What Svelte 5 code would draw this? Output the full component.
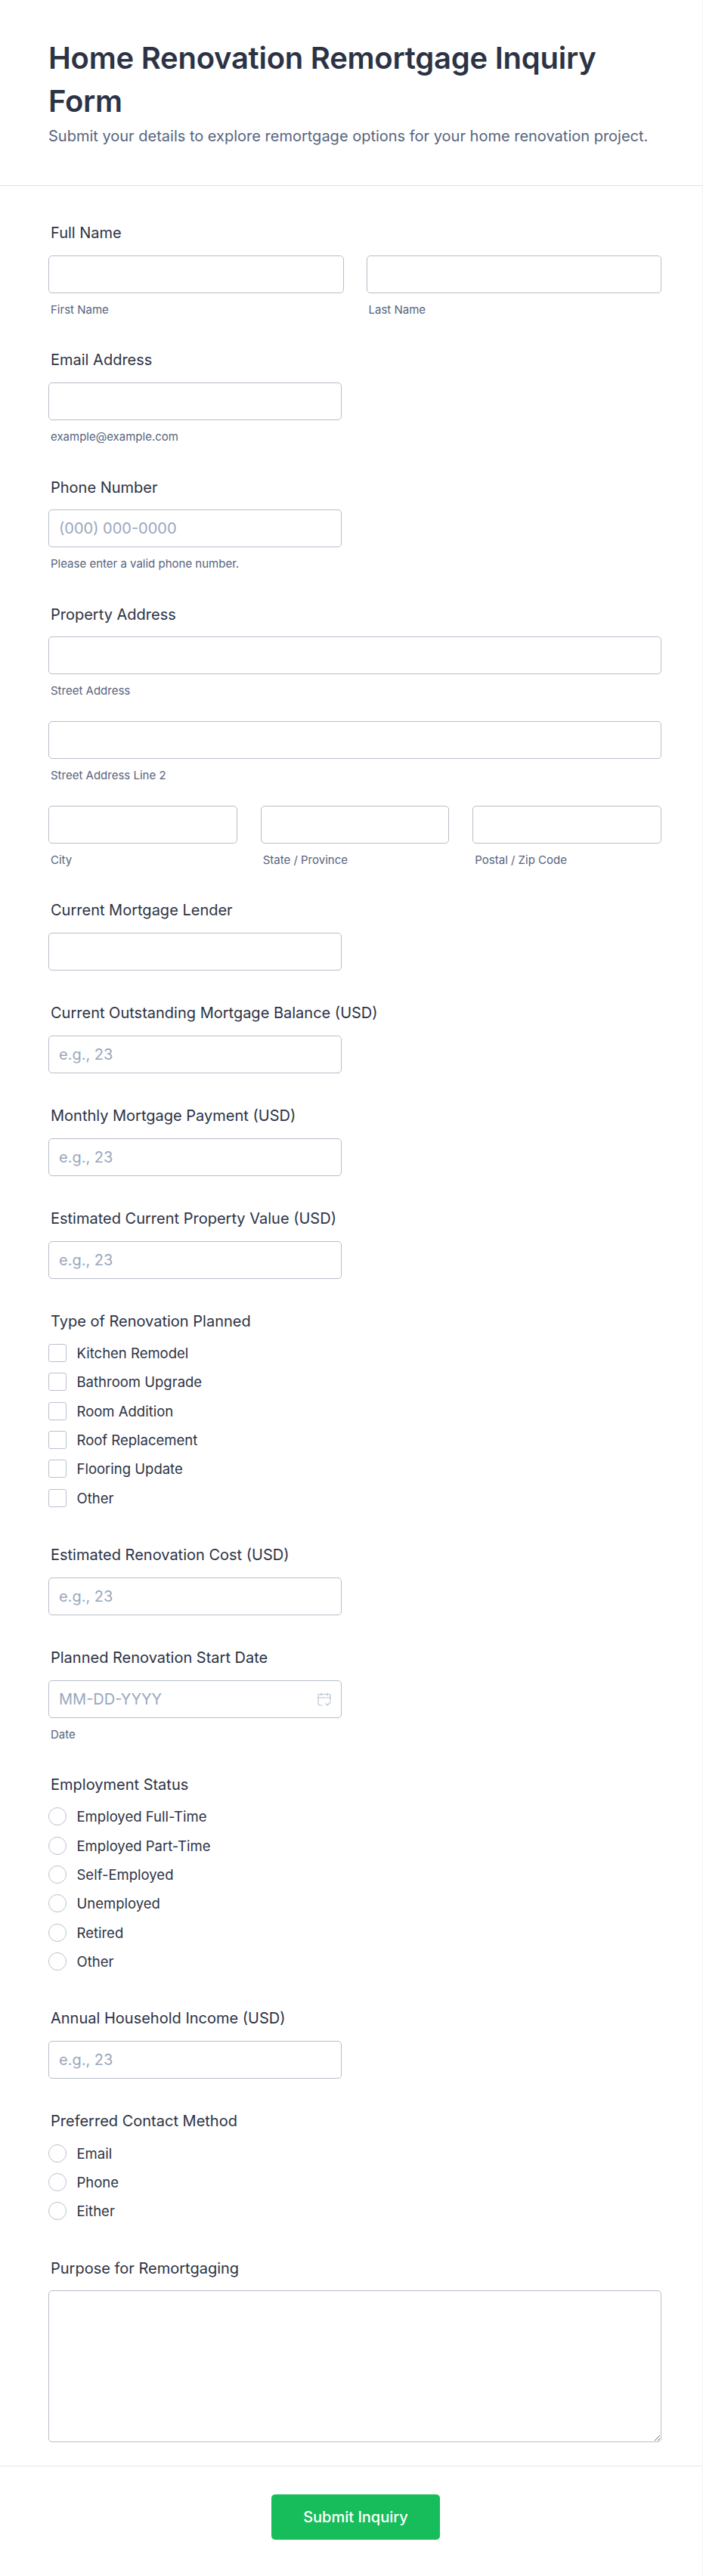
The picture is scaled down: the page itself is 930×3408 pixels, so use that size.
<script lang="ts">
	const renovationTypes = ['Kitchen Remodel', 'Bathroom Upgrade', 'Room Addition', 'Roof Replacement', 'Flooring Update', 'Other'];
	const employment = ['Employed Full-Time', 'Employed Part-Time', 'Self-Employed', 'Unemployed', 'Retired', 'Other'];
	const contact = ['Email', 'Phone', 'Either'];
</script>

<div class="page">
	<header class="head">
		<h1>Home Renovation Remortgage Inquiry Form</h1>
		<p>Submit your details to explore remortgage options for your home renovation project.</p>
	</header>

	<form class="form" onsubmit={(e) => e.preventDefault()}>
		<div class="field">
			<div class="label">Full Name</div>
			<div class="cols two">
				<div><input type="text" /><div class="sub">First Name</div></div>
				<div><input type="text" /><div class="sub">Last Name</div></div>
			</div>
		</div>

		<div class="field">
			<div class="label">Email Address</div>
			<input class="half" type="email" />
			<div class="sub">example@example.com</div>
		</div>

		<div class="field">
			<div class="label">Phone Number</div>
			<input class="half" type="tel" placeholder="(000) 000-0000" />
			<div class="sub">Please enter a valid phone number.</div>
		</div>

		<div class="field">
			<div class="label">Property Address</div>
			<input type="text" />
			<div class="sub">Street Address</div>
			<input class="next" type="text" />
			<div class="sub">Street Address Line 2</div>
			<div class="cols three next">
				<div><input type="text" /><div class="sub">City</div></div>
				<div><input type="text" /><div class="sub">State / Province</div></div>
				<div><input type="text" /><div class="sub">Postal / Zip Code</div></div>
			</div>
		</div>

		<div class="field">
			<div class="label">Current Mortgage Lender</div>
			<input class="half" type="text" />
		</div>

		<div class="field">
			<div class="label">Current Outstanding Mortgage Balance (USD)</div>
			<input class="half" type="text" placeholder="e.g., 23" />
		</div>

		<div class="field">
			<div class="label">Monthly Mortgage Payment (USD)</div>
			<input class="half" type="text" placeholder="e.g., 23" />
		</div>

		<div class="field">
			<div class="label">Estimated Current Property Value (USD)</div>
			<input class="half" type="text" placeholder="e.g., 23" />
		</div>

		<div class="field">
			<div class="label tight">Type of Renovation Planned</div>
			{#each renovationTypes as option}
				<label class="option"><span class="box"></span>{option}</label>
			{/each}
		</div>

		<div class="field">
			<div class="label">Estimated Renovation Cost (USD)</div>
			<input class="half" type="text" placeholder="e.g., 23" />
		</div>

		<div class="field">
			<div class="label">Planned Renovation Start Date</div>
			<div class="date half">
				<input type="text" placeholder="MM-DD-YYYY" />
				<svg viewBox="0 0 18 18" width="18" height="18" fill="none" stroke="#b8c2d3" stroke-width="1.2" stroke-linecap="round" stroke-linejoin="round">
					<path d="M6 17H3a2 2 0 0 1-2-2V4a1.5 1.5 0 0 1 1.5-1.5h13A1.5 1.5 0 0 1 17 4v7" />
					<path d="M1 7h16M5 1v3M13 1v3M11 15l2 2 4-4" />
				</svg>
			</div>
			<div class="sub">Date</div>
		</div>

		<div class="field">
			<div class="label tight">Employment Status</div>
			{#each employment as option}
				<label class="option"><span class="box round"></span>{option}</label>
			{/each}
		</div>

		<div class="field">
			<div class="label">Annual Household Income (USD)</div>
			<input class="half" type="text" placeholder="e.g., 23" />
		</div>

		<div class="field">
			<div class="label tight">Preferred Contact Method</div>
			{#each contact as option}
				<label class="option"><span class="box round"></span>{option}</label>
			{/each}
		</div>

		<div class="field last">
			<div class="label">Purpose for Remortgaging</div>
			<textarea></textarea>
		</div>

		<footer class="foot">
			<button type="submit">Submit Inquiry</button>
		</footer>
	</form>
</div>

<style>
	:global(body) {
		background: #fff;
	}
	.page {
		width: 930px;
		height: 3408px;
		box-sizing: border-box;
		overflow: hidden;
		border-right: 1px solid #f4f4f6;
		font-family: Inter, 'Liberation Sans', sans-serif;
		color: #2c3345;
	}
	.head {
		padding: 48px 54px 0 64px;
		border-bottom: 1px solid #dcdfe6;
		height: 246px;
		box-sizing: border-box;
	}
	h1 {
		margin: 0;
		font-size: 40px;
		line-height: 57px;
		font-weight: 600;
		letter-spacing: -0.25px;
	}
	.head p {
		margin: 4px 0 0;
		font-size: 20px;
		line-height: 28px;
		color: #57647e;
	}
	.form {
		padding: 47px 54px 0 64px;
	}
	.field {
		margin-bottom: 41.4px;
	}
	.field.last {
		margin-bottom: 30.5px;
	}
	.label {
		margin: 0 3px 14.5px;
		font-size: 20px;
		line-height: 30px;
		font-weight: 400;
	}
	.label.tight {
		margin-bottom: 8px;
	}
	input,
	textarea {
		display: block;
		width: 100%;
		box-sizing: border-box;
		height: 50px;
		padding: 0 13px;
		border: 1px solid #b8bdc9;
		border-radius: 5px;
		background: #fff;
		font: 400 20px Inter, sans-serif;
		color: #2c3345;
		outline: none;
	}
	input::placeholder {
		color: #9aa7bd;
		opacity: 1;
	}
	.half {
		width: 388px;
	}
	textarea {
		height: 201px;
	}
	.sub {
		margin: 12px 3px 0;
		font-size: 15px;
		line-height: 20.4px;
		color: #57647e;
	}
	.next {
		margin-top: 29.2px;
	}
	.cols {
		display: grid;
		gap: 30px;
	}
	.two {
		grid-template-columns: 1fr 1fr;
	}
	.three {
		grid-template-columns: repeat(3, 1fr);
		gap: 31px;
	}
	.option {
		display: flex;
		align-items: center;
		gap: 13.5px;
		height: 38.3px;
		font-size: 18.5px;
		color: #2c3345;
	}
	.box {
		width: 24px;
		height: 24px;
		box-sizing: border-box;
		border: 1px solid #bcc1cd;
		border-radius: 3px;
		background: #fff;
	}
	.box.round {
		border-radius: 50%;
	}
	.date {
		position: relative;
	}
	.date svg {
		position: absolute;
		right: 14px;
		top: 16px;
	}
	.foot {
		margin: 0 -54px 0 -64px;
		padding: 37.5px 0 37.5px 12px;
		border-top: 1px solid #e6e8ee;
		display: flex;
		justify-content: center;
	}
	button {
		width: 223px;
		height: 59.5px;
		border: 0;
		border-radius: 5px;
		background: #18bd5b;
		color: #fff;
		font: 500 20px Inter, sans-serif;
	}
</style>
